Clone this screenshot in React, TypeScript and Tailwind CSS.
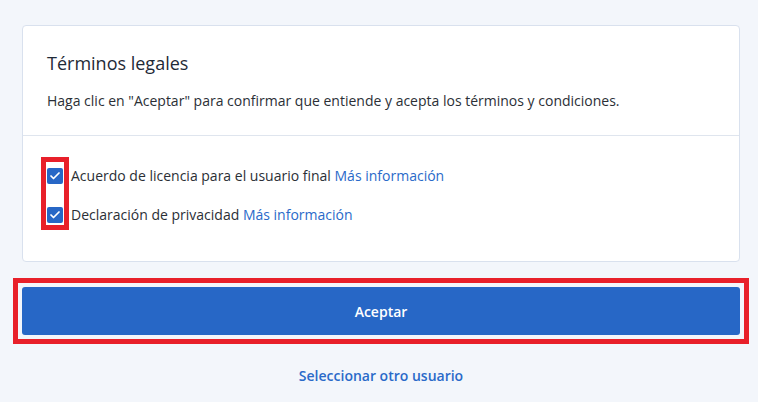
import { Check } from "lucide-react";

type TermItem = {
  label: string;
};

const terms: TermItem[] = [
  { label: "Acuerdo de licencia para el usuario final" },
  { label: "Declaración de privacidad" },
];

function CheckBox() {
  return (
    <span className="flex h-4 w-4 shrink-0 items-center justify-center rounded-[2px] bg-[#2767c6]">
      <Check className="h-3 w-3 text-white" strokeWidth={3.5} />
    </span>
  );
}

export default function App() {
  return (
    <div
      className="min-h-[402px] bg-[#f3f6fb] pl-[22px] pr-[18px] pt-[25px] text-[#2b2f36]"
      style={{ fontFamily: '"Open Sans", "Noto Sans", sans-serif' }}
    >
      <div className="rounded-[4px] border border-[#d9e1ee] bg-white">
        <div className="border-b border-[#dfe5ee] px-6 pt-[23px] pb-6">
          <h1 className="text-[18px] leading-[28px] text-[#1f2a37]">Términos legales</h1>
          <p className="mt-[14px] text-[14px] leading-5">
            Haga clic en "Aceptar" para confirmar que entiende y acepta los términos y condiciones.
          </p>
        </div>

        <div className="relative flex flex-col gap-[19px] px-6 pt-[30px] pb-9">
          {terms.map((term) => (
            <div key={term.label} className="flex items-center gap-2 text-[14px] leading-5">
              <CheckBox />
              <span>
                {term.label} <a className="text-[#2a6ac9]">Más información</a>
              </span>
            </div>
          ))}
          <div className="pointer-events-none absolute left-[18px] top-[21px] h-[73px] w-[28px] border-[5px] border-[#e8202a]" />
        </div>
      </div>

      <div className="mt-[25px] outline-[5px] outline-offset-4 outline-[#e8202a] outline-solid">
        <button
          type="button"
          className="flex h-12 w-full items-center justify-center rounded-[3px] bg-[#2767c6] text-[14px] font-semibold text-white"
        >
          Aceptar
        </button>
      </div>

      <div className="mt-[31px] flex justify-center">
        <a className="text-[14px] font-semibold leading-5 text-[#2a6ac9]">Seleccionar otro usuario</a>
      </div>
    </div>
  );
}
